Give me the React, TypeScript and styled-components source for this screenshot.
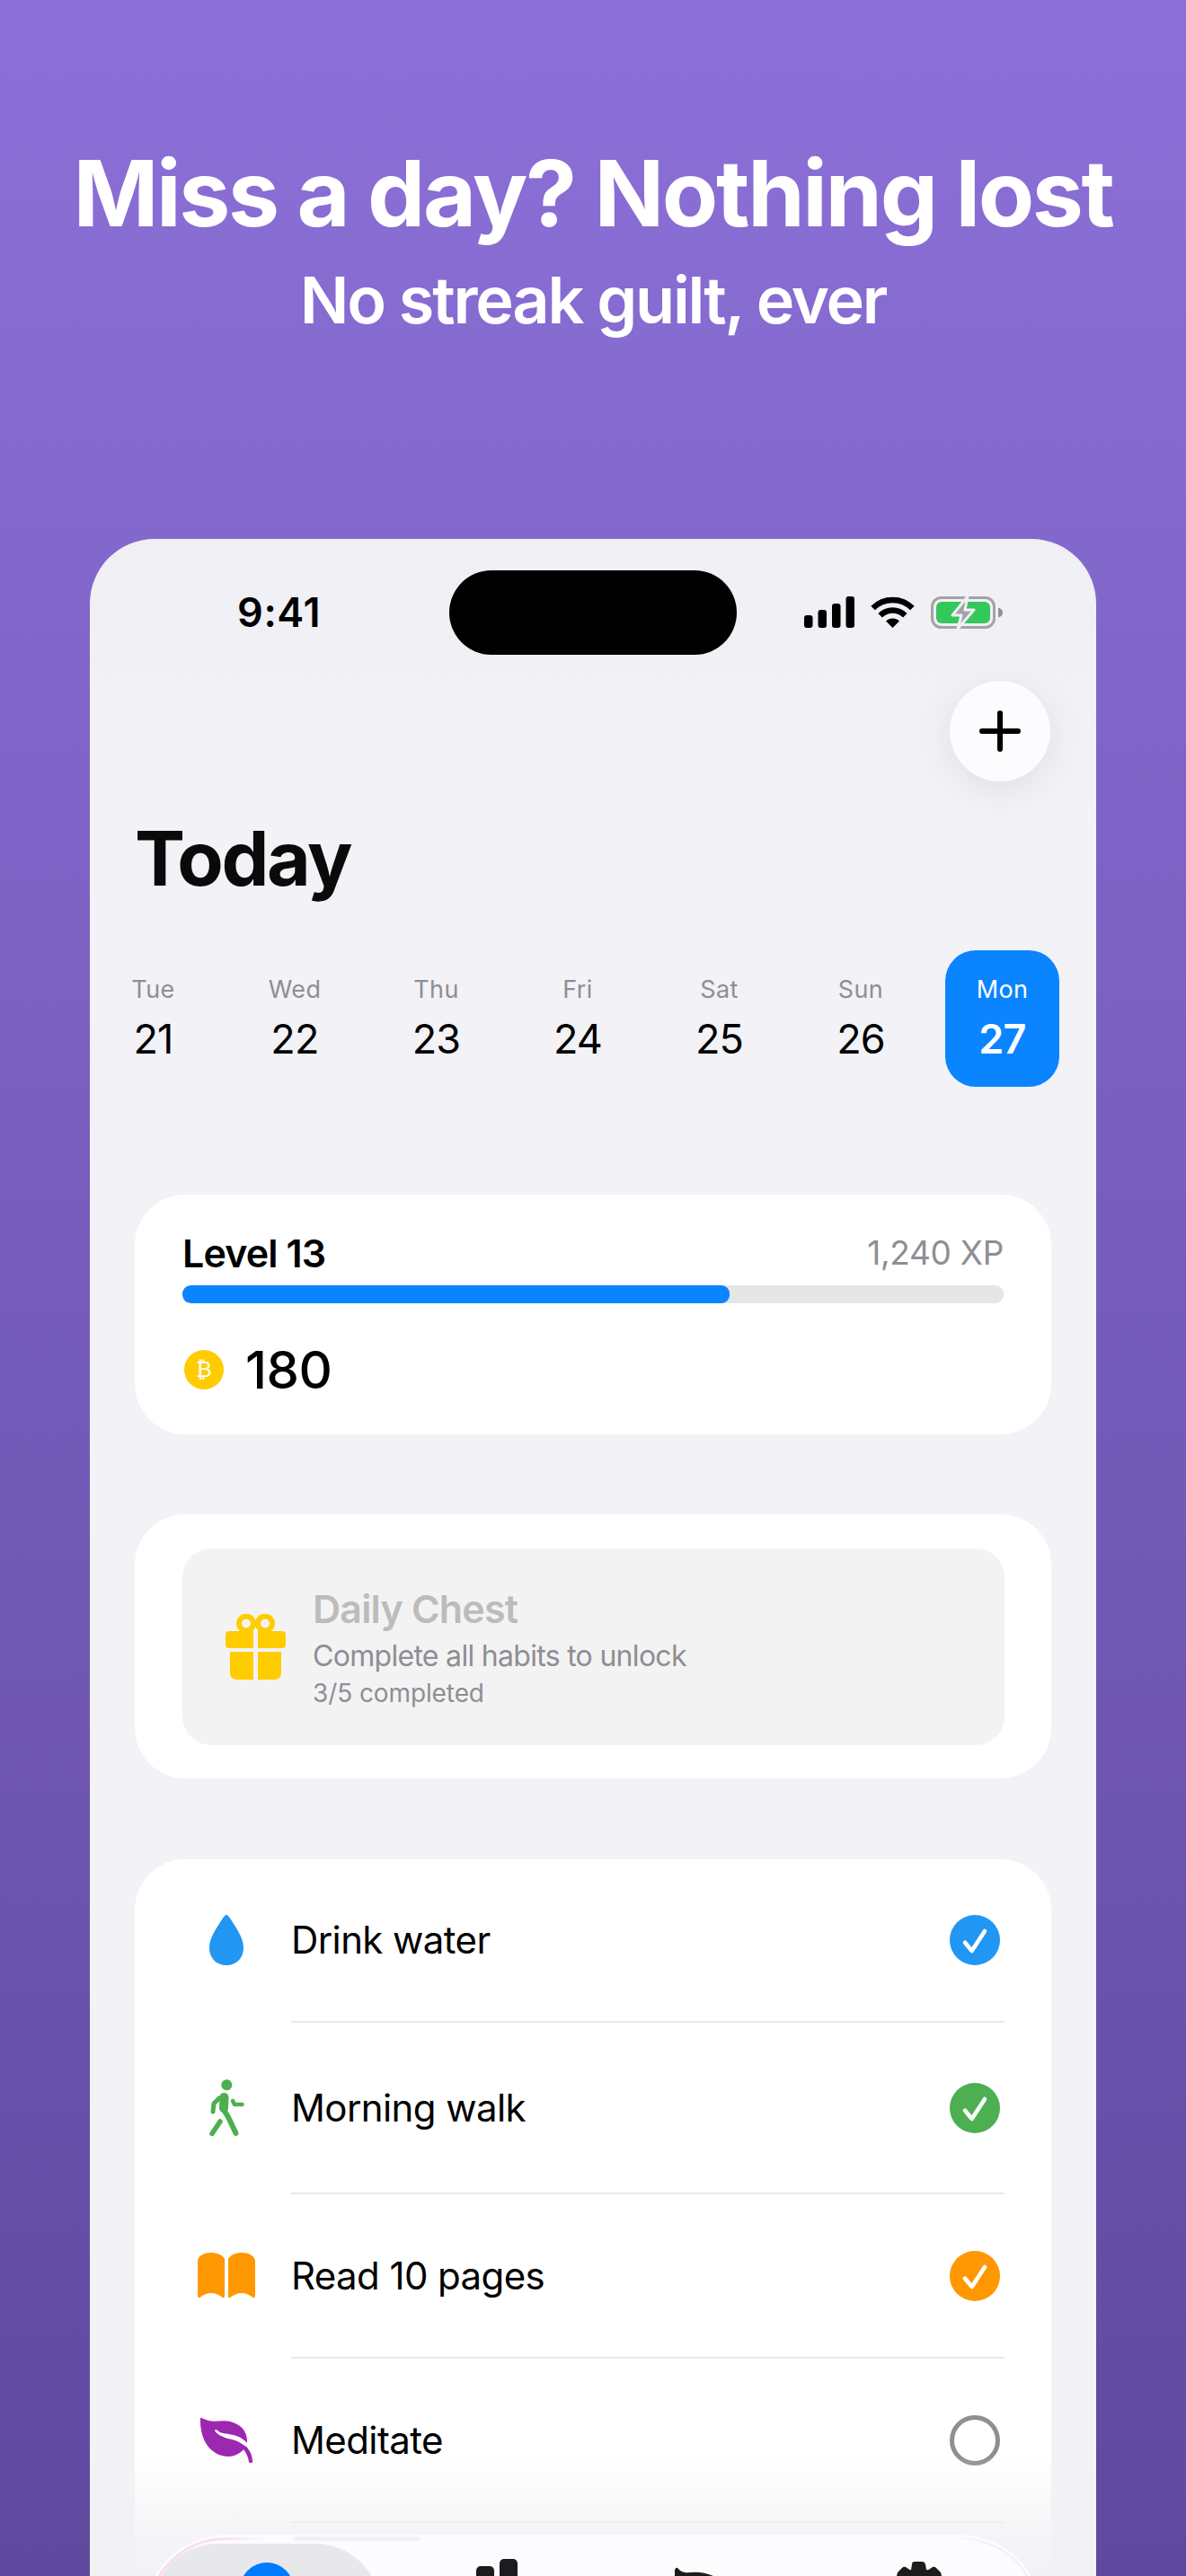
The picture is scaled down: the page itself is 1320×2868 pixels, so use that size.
import React from 'react';
import styled, { createGlobalStyle } from 'styled-components';

const GlobalStyle = createGlobalStyle`
  html, body {
    margin: 0;
    padding: 0;
  }
  body {
    font-family: 'Inter', 'Liberation Sans', sans-serif;
    -webkit-font-smoothing: antialiased;
  }
`;

const Page = styled.div`
  width: 1320px;
  height: 2868px;
  overflow: hidden;
  background: linear-gradient(180deg, #8c70d8 0%, #5f499f 100%);
`;

const Hero = styled.header`
  box-sizing: border-box;
  height: 600px;
  padding-top: 155px;
  text-align: center;
  color: #fff;
`;

const Headline = styled.h1`
  margin: 0;
  font-size: 102px;
  line-height: 120px;
  font-weight: 650;
  letter-spacing: -2.4px;
`;

const Subhead = styled.p`
  margin: 17px 0 0;
  font-size: 72px;
  line-height: 84px;
  font-weight: 600;
  letter-spacing: -2.2px;
`;

const Phone = styled.section`
  position: relative;
  height: 2268px;
  margin: 0 100px;
  overflow: hidden;
  border-radius: 72px 72px 0 0;
  background: linear-gradient(180deg, #efeff4 0, #f2f2f7 320px);
`;

const StatusBar = styled.div`
  display: flex;
  padding-top: 35px;
  height: 94px;
`;

const TimeZone = styled.div`
  box-sizing: border-box;
  width: 400px;
  padding: 22px 0 0 164px;
  font-size: 45px;
  line-height: 50px;
  font-weight: 600;
  letter-spacing: 0.6px;
  color: #000;
`;

const Island = styled.div`
  width: 320px;
  height: 94px;
  border-radius: 47px;
  background: #000;
`;

const StatusIcons = styled.div`
  display: flex;
  align-items: flex-start;
  gap: 18px;
  padding: 29px 0 0 75px;
`;

const ActionRow = styled.div`
  display: flex;
  justify-content: flex-end;
  padding: 29px 51px 0 0;
`;

const AddButton = styled.button`
  display: flex;
  align-items: center;
  justify-content: center;
  width: 112px;
  height: 112px;
  padding: 0;
  border: none;
  border-radius: 50%;
  background: #fcfcfe;
  box-shadow: 0 10px 44px rgba(0, 0, 0, 0.08);
`;

const PageTitle = styled.h2`
  margin: 36px 0 0 50px;
  font-size: 84px;
  line-height: 100px;
  font-weight: 700;
  letter-spacing: -2.3px;
  color: #0a0a0a;
`;

const DateStrip = styled.div`
  display: grid;
  grid-template-columns: repeat(7, 127px);
  column-gap: 30.5px;
  margin: 52px 0 0 7px;
`;

const DateCell = styled.div<{ $active?: boolean }>`
  display: flex;
  flex-direction: column;
  align-items: center;
  height: 152px;
  padding-top: 27px;
  box-sizing: border-box;
  border-radius: 34px;
  background: ${(p) => (p.$active ? '#0a84ff' : 'transparent')};
`;

const DayLabel = styled.span<{ $active?: boolean }>`
  font-size: 27px;
  line-height: 33px;
  letter-spacing: 0.4px;
  color: ${(p) => (p.$active ? '#fff' : '#8e8e93')};
`;

const DayNumber = styled.span<{ $active?: boolean }>`
  margin-top: 12px;
  font-size: 45px;
  line-height: 54px;
  font-weight: ${(p) => (p.$active ? 600 : 400)};
  letter-spacing: -0.8px;
  color: ${(p) => (p.$active ? '#fff' : '#000')};
`;

const Card = styled.div<{ $gap: number; $open?: boolean }>`
  margin: ${(p) => p.$gap}px 50px 0;
  padding-bottom: ${(p) => (p.$open ? '220px' : '0')};
  border-radius: 56px;
  background: #fff;
`;

const LevelBody = styled.div`
  padding: 40px 53px 50px;
`;

const LevelHead = styled.div`
  display: flex;
  justify-content: space-between;
  align-items: center;
  height: 50px;
`;

const LevelName = styled.span`
  font-size: 43px;
  line-height: 50px;
  font-weight: 600;
  letter-spacing: -0.9px;
  color: #000;
`;

const XpText = styled.span`
  font-size: 37px;
  line-height: 50px;
  letter-spacing: -0.3px;
  color: #8e8e93;
`;

const Track = styled.div`
  height: 20px;
  margin-top: 11px;
  border-radius: 9px;
  background: #e6e6e7;
  overflow: hidden;
`;

const TrackFill = styled.div`
  height: 100%;
  border-radius: 9px;
  background: #0a84ff;
`;

const CoinRow = styled.div`
  display: flex;
  align-items: center;
  gap: 24px;
  margin-top: 52px;
  height: 44px;
`;

const Coin = styled.span`
  display: flex;
  align-items: center;
  justify-content: center;
  width: 44px;
  height: 44px;
  margin-left: 2px;
  border-radius: 50%;
  background: #ffcc00;
  color: #fff;
  font-family: 'DejaVu Sans', sans-serif;
  font-size: 24px;
  line-height: 1;
`;

const CoinCount = styled.span`
  font-size: 58px;
  line-height: 60px;
  font-weight: 500;
  letter-spacing: -0.6px;
  color: #000;
`;

const ChestBody = styled.div`
  padding: 38px 52px 37px 53px;
`;

const ChestPanel = styled.div`
  display: flex;
  align-items: center;
  gap: 30px;
  height: 219px;
  padding-left: 48px;
  border-radius: 32px;
  background: #f3f3f4;
`;

const ChestTitle = styled.div`
  font-size: 43px;
  line-height: 50px;
  font-weight: 600;
  letter-spacing: -0.8px;
  color: #bcbcbc;
`;

const ChestText = styled.div`
  margin-top: 8px;
  font-size: 32px;
  line-height: 40px;
  letter-spacing: -0.7px;
  color: #8e8e93;
`;

const ChestCount = styled.div`
  margin-top: 4px;
  font-size: 28px;
  line-height: 34px;
  letter-spacing: -0.1px;
  color: #8e8e93;
`;

const HabitRow = styled.div<{ $height: number }>`
  display: flex;
  align-items: center;
  height: ${(p) => p.$height}px;
  padding-right: 57px;
`;

const HabitIcon = styled.span`
  display: flex;
  align-items: center;
  justify-content: center;
  width: 64px;
  margin: 0 40px 0 70px;
`;

const HabitName = styled.span`
  flex: 1;
  font-size: 42px;
  line-height: 50px;
  letter-spacing: -0.6px;
  color: #000;
`;

const Divider = styled.div`
  height: 2px;
  margin: 0 52px 0 174px;
  background: #e8e8e9;
`;

const CheckCircle = styled.span<{ $color?: string }>`
  display: flex;
  align-items: center;
  justify-content: center;
  box-sizing: border-box;
  width: 56px;
  height: 56px;
  border-radius: 50%;
  background: ${(p) => p.$color || 'transparent'};
  border: ${(p) => (p.$color ? 'none' : '5px solid #8e8e93')};
`;

const BottomFade = styled.div`
  position: absolute;
  left: 0;
  right: 0;
  bottom: 0;
  height: 135px;
  background: linear-gradient(
    180deg,
    rgba(242, 242, 245, 0) 0%,
    rgba(242, 242, 245, 0.72) 60%,
    rgba(242, 242, 245, 0.95) 100%
  );
`;

const TabBar = styled.nav`
  position: absolute;
  left: 60px;
  right: 60px;
  top: 2222px;
  height: 200px;
  box-sizing: border-box;
  padding: 10px;
  display: grid;
  grid-template-columns: 253px repeat(3, 1fr);
  border-radius: 92px;
  background: #fcfcfe;

  &::before {
    content: '';
    position: absolute;
    inset: 3px;
    border: 3px solid #fbdcf3;
    border-radius: 88px;
    -webkit-mask-image: linear-gradient(90deg, #000 0, #000 85px, transparent 130px);
    mask-image: linear-gradient(90deg, #000 0, #000 85px, transparent 130px);
  }

  &::after {
    content: '';
    position: absolute;
    inset: 3px;
    border: 2px solid #f1f1f5;
    border-radius: 88px;
    -webkit-mask-image: linear-gradient(270deg, #000 0, #000 60px, transparent 100px);
    mask-image: linear-gradient(270deg, #000 0, #000 60px, transparent 100px);
  }
`;

const TabItem = styled.div<{ $active?: boolean; $top: number }>`
  position: relative;
  z-index: 1;
  display: flex;
  justify-content: center;
  padding-top: ${(p) => p.$top}px;
  border-radius: 72px;
  background: ${(p) => (p.$active ? '#e8e8ea' : 'transparent')};
`;

const BlurredRow = styled.span`
  position: absolute;
  left: 167px;
  top: 3px;
  width: 140px;
  height: 3px;
  border-radius: 2px;
  background: #e8e8ea;
  filter: blur(1.5px);
`;

const ActiveDot = styled.span`
  width: 60px;
  height: 60px;
  border-radius: 50%;
  background: #007aff;
`;

const SignalIcon = () => (
  <svg width="56" height="35" viewBox="0 0 56 35">
    <rect x="0" y="21" width="9.5" height="14" rx="3" fill="#000" />
    <rect x="15.5" y="15" width="9.5" height="20" rx="3" fill="#000" />
    <rect x="31" y="8" width="9.5" height="27" rx="3" fill="#000" />
    <rect x="46.5" y="0" width="9.5" height="35" rx="3" fill="#000" />
  </svg>
);

const WifiIcon = () => (
  <svg width="49" height="35" viewBox="0 0 49 35">
    <path d="M2.6 13.1A31 31 0 0 1 46.4 13.1" fill="none" stroke="#000" strokeWidth="6.4" />
    <path d="M10.7 21.2A19.5 19.5 0 0 1 38.3 21.2" fill="none" stroke="#000" strokeWidth="6.4" />
    <path d="M24.5 35L17 27.5A10.6 10.6 0 0 1 32 27.5Z" fill="#000" />
  </svg>
);

const BatteryIcon = () => (
  <svg width="80" height="36" viewBox="0 0 80 36">
    <rect x="1.5" y="1.5" width="69" height="33" rx="10" fill="none" stroke="#a2a2a7" strokeWidth="3" />
    <rect x="6" y="6" width="60" height="24" rx="6" fill="#34c759" />
    <path d="M75 12.5Q80 14 80 18Q80 22 75 23.5Z" fill="#8e8e93" />
    <path
      d="M41 0L24 21H34L30 36L48 15H38Z"
      fill="#a2a2a7"
      stroke="#f0f0f5"
      strokeWidth="3"
      strokeLinejoin="round"
    />
  </svg>
);

const PlusIcon = () => (
  <svg width="46" height="46" viewBox="0 0 46 46">
    <path d="M23 3V43M3 23H43" stroke="#000" strokeWidth="6" strokeLinecap="round" />
  </svg>
);

const GiftIcon = () => (
  <svg width="67" height="73" viewBox="0 0 67 73">
    <circle cx="23" cy="10.5" r="8" fill="none" stroke="#ffcc00" strokeWidth="6" />
    <circle cx="44" cy="10.5" r="8" fill="none" stroke="#ffcc00" strokeWidth="6" />
    <path d="M4 19H31V38H4Q0 38 0 34V23Q0 19 4 19Z" fill="#ffcc00" />
    <path d="M36 19H63Q67 19 67 23V34Q67 38 63 38H36Z" fill="#ffcc00" />
    <path d="M5 42H31V73H13Q5 73 5 65Z" fill="#ffcc00" />
    <path d="M36 42H62V65Q62 73 54 73H36Z" fill="#ffcc00" />
  </svg>
);

const DropIcon = () => (
  <svg width="38" height="56" viewBox="0 0 38 56">
    <path
      d="M19 0C20.5 0 22 2 24 5C30 15 38 25 38 37C38 48 30 56 19 56C8 56 0 48 0 37C0 25 8 15 14 5C16 2 17.5 0 19 0Z"
      fill="#2196f3"
    />
  </svg>
);

const WalkIcon = () => (
  <svg width="39" height="63" viewBox="0 0 39 63">
    <circle cx="19.3" cy="6.2" r="6" fill="#4caf50" />
    <g fill="none" stroke="#4caf50" strokeLinecap="round" strokeLinejoin="round">
      <path d="M16.5 20L16 32" strokeWidth="10" />
      <path d="M11 21L5 27L4 36" strokeWidth="5" />
      <path d="M16 34L21 42L29.5 60" strokeWidth="6" />
      <path d="M12 47L3 60.5" strokeWidth="5.5" />
      <path d="M26 24L28 28H36.5" strokeWidth="4.5" />
    </g>
  </svg>
);

const BookIcon = () => (
  <svg width="64" height="51" viewBox="0 0 64 51">
    <path
      d="M0 10C0 3 8 0 15 0C21 0 27 2 30 7V48Q30 51 28 50C24 47 20 45 15 45C10 45 6 47 2.5 50Q0 51 0 48Z"
      fill="#ff9800"
    />
    <path
      d="M64 10C64 3 56 0 49 0C43 0 37 2 34 7V48Q34 51 36 50C40 47 44 45 49 45C54 45 58 47 61.5 50Q64 51 64 48Z"
      fill="#ff9800"
    />
  </svg>
);

const LeafIcon = () => (
  <svg width="60" height="51" viewBox="0 0 60 51">
    <path
      d="M1 1C4 1 6 3 10 4C18 6 26 3 34 5C46 8 54 16 53 29C51 37 42 44 32 44C16 44 0 30 1 1Z"
      fill="#9c27b0"
    />
    <path
      d="M17 15C19 19 26 23 36 25C44 27 50 31 54 36L56 32C52 27 46 22 38 20C30 18 24 19 20 15Q18 13 17 15Z"
      fill="#fff"
    />
    <path d="M51 35Q56 41 57 49" fill="none" stroke="#9c27b0" strokeWidth="4.5" strokeLinecap="round" />
  </svg>
);

const CheckMark = () => (
  <svg width="56" height="56" viewBox="0 0 56 56">
    <path
      d="M17 30.7L24.7 40L39 18"
      fill="none"
      stroke="#fff"
      strokeWidth="4.6"
      strokeLinecap="round"
      strokeLinejoin="round"
    />
  </svg>
);

const ChartIcon = () => (
  <svg width="64" height="64" viewBox="0 0 64 64" overflow="visible">
    <rect x="-8" y="30" width="20" height="34" rx="5" fill="#1c1c1e" />
    <rect x="18" y="11" width="20" height="53" rx="5" fill="#1c1c1e" />
    <rect x="44" y="3" width="20" height="61" rx="5" fill="#1c1c1e" />
  </svg>
);

const FlagIcon = () => (
  <svg width="64" height="64" viewBox="0 0 64 64" overflow="visible">
    <path d="M-3 5Q-1 1 1 4Q5 9 14 8Q30 6 46 15V64H-3Z" fill="#1c1c1e" />
  </svg>
);

const GearIcon = () => (
  <svg width="64" height="64" viewBox="0 0 64 64" overflow="visible">
    <path
      d="M18 3Q18 0 21 0H29Q32 0 33 3L34 9Q36 10 38 8L41 6Q43 5 45 7L50 12L51 16V64H1V16L2 12L7 7Q9 5 11 6L14 8Q16 10 17 9Z"
      fill="#1c1c1e"
    />
  </svg>
);

const days = [
  { label: 'Tue', date: 21 },
  { label: 'Wed', date: 22 },
  { label: 'Thu', date: 23 },
  { label: 'Fri', date: 24 },
  { label: 'Sat', date: 25 },
  { label: 'Sun', date: 26 },
  { label: 'Mon', date: 27, active: true },
];

const habits = [
  { name: 'Drink water', icon: <DropIcon />, color: '#2196f3', height: 180 },
  { name: 'Morning walk', icon: <WalkIcon />, color: '#4caf50', height: 189 },
  { name: 'Read 10 pages', icon: <BookIcon />, color: '#ff9800', height: 181 },
  { name: 'Meditate', icon: <LeafIcon />, height: 181 },
];

const App: React.FC = () => {
  return (
    <Page>
      <GlobalStyle />
      <Hero>
        <Headline>Miss a day? Nothing lost</Headline>
        <Subhead>No streak guilt, ever</Subhead>
      </Hero>
      <Phone>
        <StatusBar>
          <TimeZone>9:41</TimeZone>
          <Island />
          <StatusIcons>
            <SignalIcon />
            <WifiIcon />
            <BatteryIcon />
          </StatusIcons>
        </StatusBar>
        <ActionRow>
          <AddButton aria-label="Add habit">
            <PlusIcon />
          </AddButton>
        </ActionRow>
        <PageTitle>Today</PageTitle>
        <DateStrip>
          {days.map((d) => (
            <DateCell key={d.date} $active={d.active}>
              <DayLabel $active={d.active}>{d.label}</DayLabel>
              <DayNumber $active={d.active}>{d.date}</DayNumber>
            </DateCell>
          ))}
        </DateStrip>
        <Card $gap={120}>
          <LevelBody>
            <LevelHead>
              <LevelName>Level 13</LevelName>
              <XpText>1,240 XP</XpText>
            </LevelHead>
            <Track>
              <TrackFill style={{ width: `${(610 / 915) * 100}%` }} />
            </Track>
            <CoinRow>
              <Coin>₿</Coin>
              <CoinCount>180</CoinCount>
            </CoinRow>
          </LevelBody>
        </Card>
        <Card $gap={89}>
          <ChestBody>
            <ChestPanel>
              <GiftIcon />
              <div>
                <ChestTitle>Daily Chest</ChestTitle>
                <ChestText>Complete all habits to unlock</ChestText>
                <ChestCount>3/5 completed</ChestCount>
              </div>
            </ChestPanel>
          </ChestBody>
        </Card>
        <Card $gap={90} $open>
          {habits.map((h) => (
            <React.Fragment key={h.name}>
              <HabitRow $height={h.height}>
                <HabitIcon>{h.icon}</HabitIcon>
                <HabitName>{h.name}</HabitName>
                <CheckCircle $color={h.color}>{h.color && <CheckMark />}</CheckCircle>
              </HabitRow>
              <Divider />
            </React.Fragment>
          ))}
        </Card>
        <BottomFade />
        <TabBar>
          <BlurredRow />
          <TabItem $active $top={21}>
            <ActiveDot />
          </TabItem>
          <TabItem $top={14}>
            <ChartIcon />
          </TabItem>
          <TabItem $top={24}>
            <FlagIcon />
          </TabItem>
          <TabItem $top={20}>
            <GearIcon />
          </TabItem>
        </TabBar>
      </Phone>
    </Page>
  );
};

export default App;
